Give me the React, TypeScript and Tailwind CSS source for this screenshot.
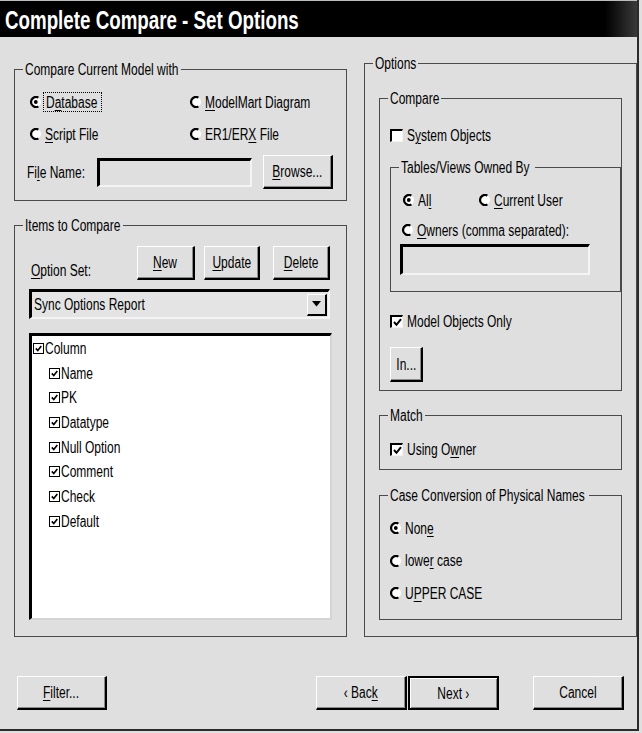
import React from 'react';

// the dialog's font is a narrow sans; squeeze Liberation Sans to match
const T = ({ children, center }: { children: React.ReactNode; center?: boolean }) => (
    <span className={`inline-block whitespace-nowrap scale-x-[0.75] ${center ? 'origin-center' : 'origin-left'}`}>
        {children}
    </span>
);

const U = ({ children }: { children: React.ReactNode }) => (
    <span className="underline underline-offset-2 decoration-1">{children}</span>
);

function Radio({ checked }: { checked?: boolean }) {
    return (
        <svg width="12" height="12" viewBox="0 0 12 12" className="shrink-0">
            <circle cx="6" cy="6" r="5" fill="#fff" />
            <path d="M8.4 1.6 A5 5 0 1 0 8.4 10.4" fill="none" stroke="#000" strokeWidth="2.2" />
            {checked && <circle cx="5.8" cy="6" r="1.9" fill="#000" />}
        </svg>
    );
}

function RadioOpt({ checked, children }: { checked?: boolean; children: React.ReactNode }) {
    return (
        <div className="flex items-center gap-[3px] h-[18px]">
            <Radio checked={checked} />
            <T>{children}</T>
        </div>
    );
}

function Check3D({ checked }: { checked?: boolean }) {
    return (
        <span className="w-[13px] h-[13px] shrink-0 flex items-center justify-center bg-white border-t-2 border-l-2 border-t-black border-l-black border-b border-r border-b-[#f2f2f2] border-r-[#f2f2f2]">
            {checked && (
                <svg width="9" height="9" viewBox="0 0 9 9">
                    <path d="M1 4 L3.5 6.8 L8 1.2" stroke="#000" strokeWidth="2" fill="none" />
                </svg>
            )}
        </span>
    );
}

function CheckOpt({ checked, children }: { checked?: boolean; children: React.ReactNode }) {
    return (
        <div className="flex items-center gap-[4px] h-[17px]">
            <Check3D checked={checked} />
            <T>{children}</T>
        </div>
    );
}

function Btn({ className = '', isDefault, children }: { className?: string; isDefault?: boolean; children: React.ReactNode }) {
    const edge = isDefault
        ? 'border-2 border-black shadow-[inset_1px_1px_0_#fff,inset_-1px_-1px_0_#808080]'
        : 'border-t border-l border-t-white border-l-white border-b-2 border-r-2 border-b-black border-r-black shadow-[inset_-1px_-1px_0_#8a8a8a]';
    return (
        <div className={`flex items-center justify-center bg-[#dfdfdf] ${edge} ${className}`}>
            <T center>{children}</T>
        </div>
    );
}

function Group({ label, lw, className = '', children }: { label: string; lw: string; className?: string; children: React.ReactNode }) {
    return (
        <fieldset className={`border border-[#4a4a4a] ${className}`}>
            <legend className={`ml-[8px] px-[2px] leading-[17px] ${lw}`}>
                <T>{label}</T>
            </legend>
            {children}
        </fieldset>
    );
}

const sunken = 'border-t-[3px] border-l-[3px] border-t-black border-l-black border-b-2 border-r-2 border-b-[#f4f4f4] border-r-[#f4f4f4]';

function TreeItem({ label, child }: { label: string; child?: boolean }) {
    return (
        <div className={`flex items-center gap-[1px] h-[24.7px] ${child ? 'pl-[17px]' : 'pl-[1px]'}`}>
            <span className="w-[11px] h-[11px] shrink-0 flex items-center justify-center border border-black bg-white">
                <svg width="7" height="7" viewBox="0 0 7 7">
                    <path d="M0.8 3.4 L2.8 5.6 L6.3 0.9" stroke="#000" strokeWidth="1.6" fill="none" />
                </svg>
            </span>
            <T>{label}</T>
        </div>
    );
}

export default function App() {
    return (
        <div className="w-[642px] h-[733px] bg-[#dfdfdf] text-black text-[16px] leading-[17px] font-['Liberation_Sans',Arial,sans-serif]">
            <div className="w-[639px] h-[731px] flex flex-col border-r-2 border-b-2 border-r-[#2b2b2b] border-b-[#2b2b2b]">
                {/* Title bar */}
                <div className="h-[37px] shrink-0 flex items-center pl-[5px] pt-[2px] border-t border-[#bdbdbd] bg-[linear-gradient(to_right,#000_0%,#000_95%,#3a3a3a_100%)]">
                    <span className="inline-block whitespace-nowrap origin-left scale-x-[0.75] text-white text-[25px] leading-[28px] font-bold">
                        Complete Compare - Set Options
                    </span>
                </div>

                <div className="flex pl-[14px]">
                    {/* Left column */}
                    <div className="w-[333px] pt-[24px] flex flex-col">
                        <Group label="Compare Current Model with" lw="w-[158px]" className="h-[140px]">
                            <div className="grid grid-cols-[160px_1fr] pl-[15px] pt-[14px] gap-y-[12px]">
                                <div className="flex items-center gap-[1px] h-[20px]">
                                    <Radio checked />
                                    <span className="w-[59px] h-[20px] flex items-center pl-[2px] border border-dotted border-black">
                                        <T>D<U>a</U>tabase</T>
                                    </span>
                                </div>
                                <div className="flex items-center h-[20px]">
                                    <RadioOpt><U>M</U>odelMart Diagram</RadioOpt>
                                </div>
                                <div className="flex items-center h-[20px]">
                                    <RadioOpt><U>S</U>cript File</RadioOpt>
                                </div>
                                <div className="flex items-center h-[20px]">
                                    <RadioOpt>ER1/ER<U>X</U> File</RadioOpt>
                                </div>
                            </div>
                            <div className="flex items-center pl-[12px] mt-[11px] h-[34px]">
                                <span className="w-[70px]"><T>Fi<U>l</U>e Name:</T></span>
                                <div className={`w-[155px] h-[29px] ${sunken}`} />
                                <Btn className="w-[70px] h-[34px] ml-[11px]"><U>B</U>rowse...</Btn>
                            </div>
                        </Group>

                        <Group label="Items to Compare" lw="w-[100px]" className="h-[420px] mt-[16px]">
                            <div className="flex items-end pl-[16px] mt-[12px]">
                                <span className="w-[106px] pb-[1px]"><T><U>O</U>ption Set:</T></span>
                                <Btn className="w-[58px] h-[34px]"><U>N</U>ew</Btn>
                                <Btn className="w-[56px] h-[34px] ml-[9px]"><U>U</U>pdate</Btn>
                                <Btn className="w-[57px] h-[34px] ml-[13px]"><U>D</U>elete</Btn>
                            </div>
                            <div className={`ml-[14px] mt-[9px] w-[301px] h-[30px] flex items-center justify-between pl-[2px] pr-[1px] bg-[#e4e4e4] ${sunken}`}>
                                <T>Sync Options Report</T>
                                <div className="w-[20px] h-[22px] flex items-center justify-center bg-[#dfdfdf] border-t border-l border-t-white border-l-white border-b-2 border-r-2 border-b-black border-r-black">
                                    <svg width="9" height="6" viewBox="0 0 9 6">
                                        <path d="M0 0 H9 L4.5 5.5 Z" fill="#000" />
                                    </svg>
                                </div>
                            </div>
                            <div className="ml-[14px] mt-[14px] w-[303px] h-[287px] bg-white border-t-[3px] border-l-[3px] border-t-black border-l-black border-b-2 border-r-2 border-b-[#d4d4d4] border-r-[#d4d4d4]">
                                <TreeItem label="Column" />
                                <TreeItem label="Name" child />
                                <TreeItem label="PK" child />
                                <TreeItem label="Datatype" child />
                                <TreeItem label="Null Option" child />
                                <TreeItem label="Comment" child />
                                <TreeItem label="Check" child />
                                <TreeItem label="Default" child />
                            </div>
                        </Group>
                    </div>

                    {/* Right column */}
                    <div className="w-[261px] ml-[17px] pt-[18px]">
                        <Group label="Options" lw="w-[45px]" className="h-[582px]">
                            <div className="pl-[14px] pr-[14px] mt-[18px] flex flex-col">
                                <Group label="Compare" lw="w-[53px]" className="h-[301px]">
                                    <div className="pl-[10px] mt-[20px]">
                                        <CheckOpt>S<U>y</U>stem Objects</CheckOpt>
                                    </div>
                                    <Group label="Tables/Views Owned By" lw="w-[136px]" className="ml-[10px] w-[209px] h-[133px] mt-[15px]">
                                        <div className="grid grid-cols-[76px_1fr] pl-[12px] mt-[15px]">
                                            <RadioOpt checked>Al<U>l</U></RadioOpt>
                                            <RadioOpt><U>C</U>urrent User</RadioOpt>
                                        </div>
                                        <div className="pl-[11px] mt-[12px]">
                                            <RadioOpt><U>O</U>wners (comma separated):</RadioOpt>
                                        </div>
                                        <div className={`ml-[9px] mt-[5px] w-[190px] h-[31px] ${sunken}`} />
                                    </Group>
                                    <div className="pl-[10px] mt-[21px]">
                                        <CheckOpt checked>Model Objects Only</CheckOpt>
                                    </div>
                                    <Btn className="ml-[10px] mt-[17px] w-[33px] h-[35px]">In...</Btn>
                                </Group>

                                <Group label="Match" lw="w-[37px]" className="h-[63px] mt-[16px]">
                                    <div className="pl-[10px] mt-[17px]">
                                        <CheckOpt checked>Using O<U>w</U>ner</CheckOpt>
                                    </div>
                                </Group>

                                <Group label="Case Conversion of Physical Names" lw="w-[201px]" className="h-[133px] mt-[17px]">
                                    <div className="pl-[10px] mt-[15px] flex flex-col gap-[14.5px]">
                                        <RadioOpt checked>Non<U>e</U></RadioOpt>
                                        <RadioOpt>lowe<U>r</U> case</RadioOpt>
                                        <RadioOpt>U<U>P</U>PER CASE</RadioOpt>
                                    </div>
                                </Group>
                            </div>
                        </Group>
                    </div>
                </div>

                {/* Bottom buttons */}
                <div className="flex pl-[17px] mt-[39px]">
                    <Btn className="w-[90px] h-[34px]"><U>F</U>ilter...</Btn>
                    <Btn className="w-[91px] h-[34px] ml-[209px]">&lsaquo; Bac<U>k</U></Btn>
                    <Btn className="w-[91px] h-[34px] ml-[1px]" isDefault>Next &rsaquo;</Btn>
                    <Btn className="w-[91px] h-[34px] ml-[34px]">Cancel</Btn>
                </div>
            </div>
        </div>
    );
}
